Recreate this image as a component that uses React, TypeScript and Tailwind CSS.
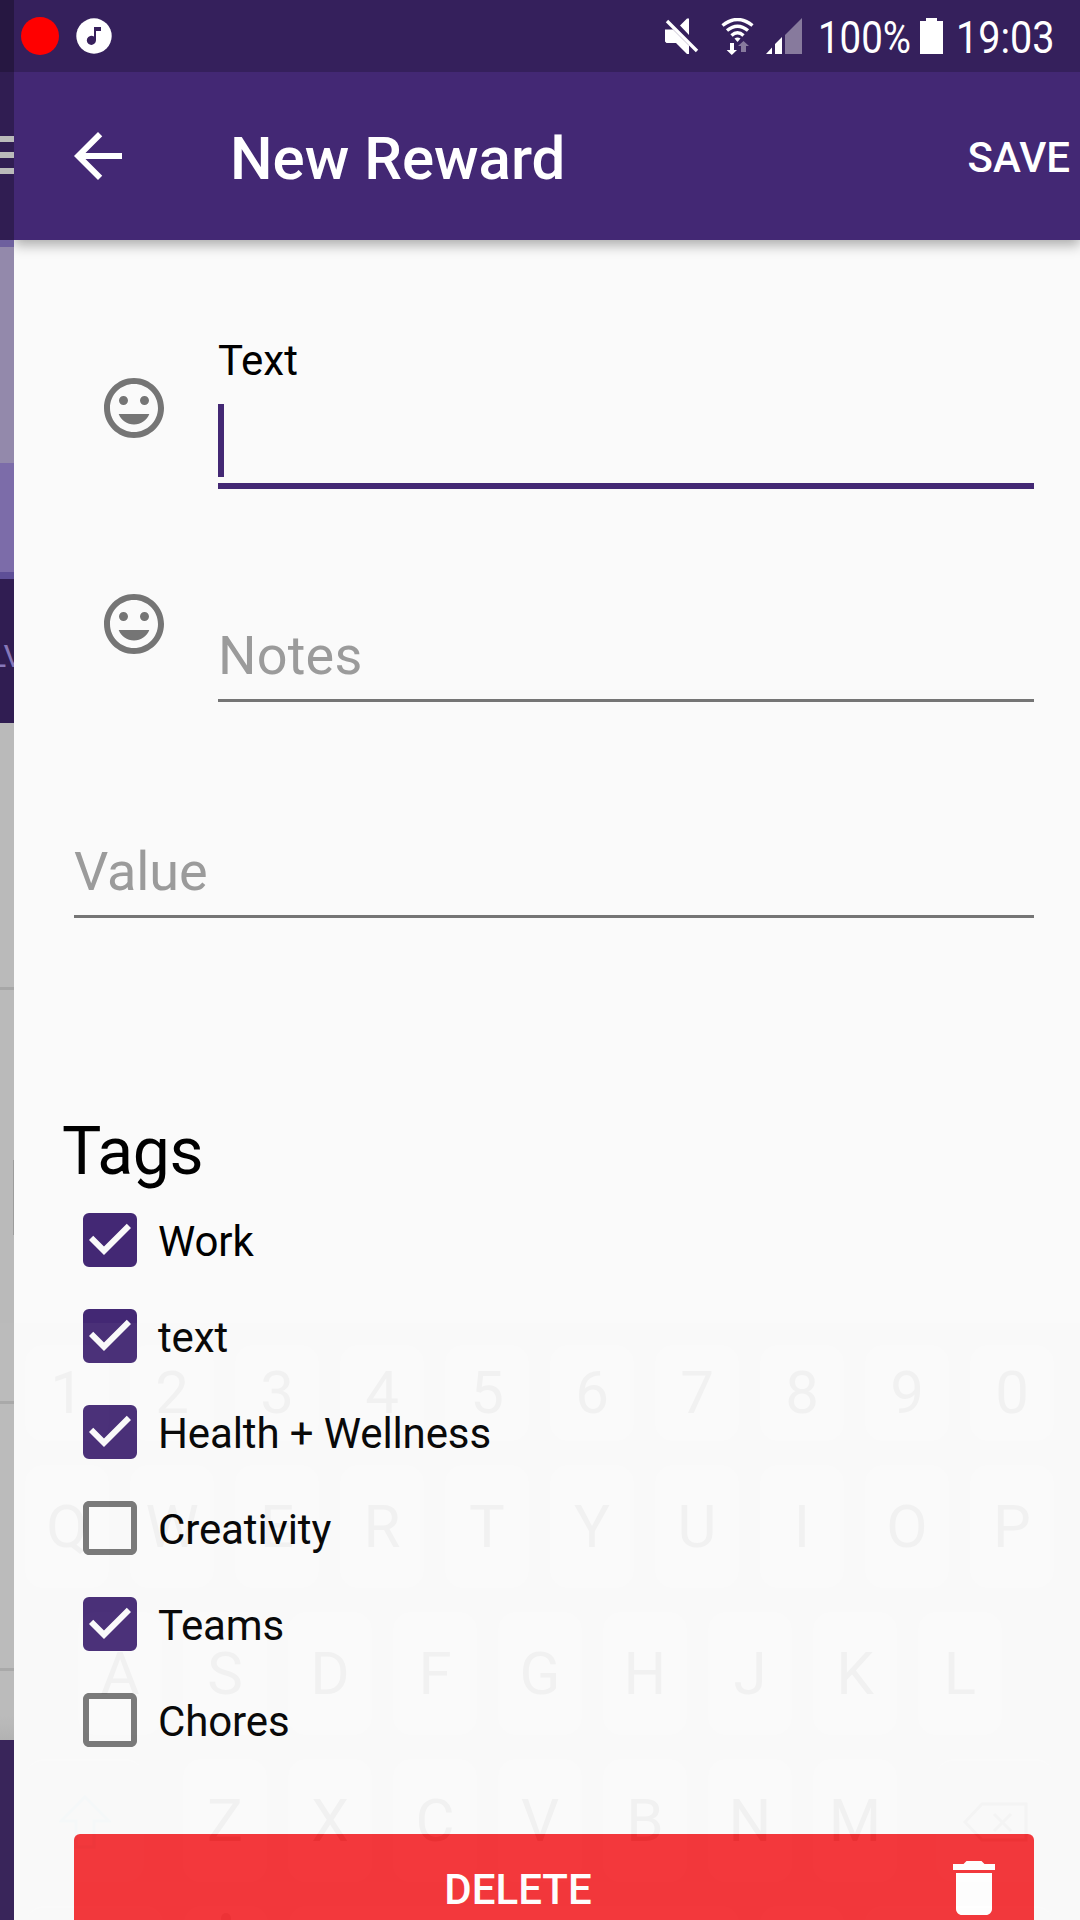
import type { ReactNode } from "react";
import {
  MdArrowBack,
  MdCheckBox,
  MdCheckBoxOutlineBlank,
  MdDelete,
  MdTagFaces,
} from "react-icons/md";

const tags = [
  { name: "Work", checked: true },
  { name: "text", checked: true },
  { name: "Health + Wellness", checked: true },
  { name: "Creativity", checked: false },
  { name: "Teams", checked: true },
  { name: "Chores", checked: false },
];

function StatusBar() {
  return (
    <div className="absolute inset-x-0 top-0 z-20 flex h-[72px] items-center bg-black/20 pl-[21px] text-white">
      <div className="size-[38px] rounded-full bg-[#ff0000]" />
      <svg className="ml-[17px] size-9" viewBox="0 0 36 36">
        <circle cx="18" cy="18" r="17.7" fill="#fff" />
        <path d="M18 9h7v4h-5v9.3a4.6 4.6 0 1 1-2-3.8z" fill="#37205c" />
      </svg>
      <svg className="ml-auto h-[37px] w-[138px]" viewBox="0 0 138 37">
        <g fill="#fff">
          <path d="M0 11.500h8L24 27.500V36h-2L11 25H1.500L0 23.500zM15 7.500L22 0.500h2V17z" />
          <path d="M2 3L32 33" stroke="#fff" strokeWidth="3.400" />
        </g>
        <g fill="none" stroke="#fff" strokeWidth="3.4">
          <path d="M57.500 7.500Q72.500-4.500 87.500 7.500" />
          <path d="M62 12.500Q72.500 4 83 12.500" />
          <path d="M66.500 17.500Q72.500 12 78.500 17.500" />
        </g>
        <path d="M69.500 20.500q3-2 6 0l-3 3.500z" fill="#fff" />
        <path d="M65 25h4v7h3l-5.200 5-5.200-5H65z" fill="#fff" />
        <path d="M76 34h5v-6h3l-5.500-5-5.500 5h3z" fill="#877a9d" />
        <path d="M101 36l6-6.500V36zM110 36V26l7-7v17z" fill="#fff" />
        <path d="M120 36V17L137 0v36z" fill="#877a9d" />
      </svg>
      <div className="ml-[15px] w-[93px] whitespace-nowrap pt-[3px] text-[45px] leading-[52px]">
        <span className="inline-block origin-left scale-x-[0.855]">100%</span>
      </div>
      <svg className="ml-[9px] h-9 w-[23px]" viewBox="0 0 23 36">
        <path d="M6 0h11v3h6v33H0V3h6z" fill="#fff" />
      </svg>
      <div className="ml-[13px] mr-[26px] w-[98px] whitespace-nowrap pt-[3px] text-[45px] leading-[52px]">
        <span className="inline-block origin-left scale-x-[0.88]">19:03</span>
      </div>
    </div>
  );
}

function PreviousScreen() {
  return (
    <div className="flex w-[14px] shrink-0 flex-col overflow-hidden bg-[#bababa]">
      <div className="flex h-[240px] shrink-0 flex-col gap-[10px] bg-[#301d52] pt-[136px]">
        <div className="h-1.5 shrink-0 bg-[#bababa]" />
        <div className="h-1.5 shrink-0 bg-[#bababa]" />
        <div className="h-1.5 shrink-0 bg-[#bababa]" />
      </div>
      <div className="h-[7px] shrink-0 bg-[#6e609e]" />
      <div className="h-[216px] shrink-0 bg-[#9389ab]" />
      <div className="h-[109px] shrink-0 bg-[#7c6ca9]" />
      <div className="h-[7px] shrink-0 bg-[#5e4f97]" />
      <div className="h-[144px] shrink-0 bg-[#301d52] pt-[58px] text-[32px] leading-[38px] text-[#8778b9]">
        <div className="-ml-[11px] whitespace-nowrap">LV</div>
      </div>
      <div className="mt-[264px] h-[3px] shrink-0 bg-[#a7a7a7]" />
      <div className="ml-[13px] mt-[170px] h-[75px] shrink-0 bg-[#9c9c9c]" />
      <div className="mt-[166px] h-[3px] shrink-0 bg-[#a7a7a7]" />
      <div className="mt-[264px] h-[3px] shrink-0 bg-[#a7a7a7]" />
      <div className="mt-[45px] h-6 shrink-0 bg-linear-to-b from-[#bababa] to-[#b0b0b0]" />
      <div className="h-[180px] shrink-0 bg-[#321d54]" />
    </div>
  );
}

function Key({ label, children, wide }: { label?: string; children?: ReactNode; wide?: boolean }) {
  return (
    <div
      className={
        wide
          ? "flex h-full w-[118px] shrink-0 items-center justify-center rounded-[18px] border-t-2 border-white bg-[#f0f0f0]"
          : "flex h-full w-[84px] shrink-0 items-center justify-center rounded-[18px] bg-white"
      }
    >
      {label}
      {children}
    </div>
  );
}

function Keyboard() {
  return (
    <div className="pointer-events-none absolute inset-x-0 top-[1323px] z-10 flex h-[597px] flex-col gap-6 overflow-hidden bg-[#e6e6e6] pt-[22px] text-[60px] leading-[70px] text-[#303030] opacity-[0.04]">
      <div className="flex h-24 shrink-0 gap-[21px] pl-[25px]">
        {"1234567890".split("").map((k) => (
          <Key key={k} label={k} />
        ))}
      </div>
      <div className="flex h-[123px] shrink-0 gap-[21px] pl-[25px]">
        {"QWERTYUIOP".split("").map((k) => (
          <Key key={k} label={k} />
        ))}
      </div>
      <div className="flex h-[123px] shrink-0 gap-[21px] pl-[78px]">
        {"ASDFGHJKL".split("").map((k) => (
          <Key key={k} label={k} />
        ))}
      </div>
      <div className="flex h-[123px] shrink-0 justify-between pl-[26px] pr-[26px]">
        <Key wide>
          <svg className="h-[54px] w-[52px]" viewBox="0 0 52 54" fill="none" stroke="#90d8e4" strokeWidth="3">
            <path d="M26 2L50 26H35v26H17V26H2z" />
          </svg>
        </Key>
        <div className="flex gap-[21px]">
          {"ZXCVBNM".split("").map((k) => (
            <Key key={k} label={k} />
          ))}
        </div>
        <Key wide>
          <svg className="h-[40px] w-[65px]" viewBox="0 0 65 40" fill="none" stroke="#777" strokeWidth="3">
            <path d="M19 2h44v36H19L2 20zM31 12l17 17M48 12L31 29" />
          </svg>
        </Key>
      </div>
      <div className="flex h-[123px] shrink-0 gap-[21px] pl-[26px] pr-[26px]">
        <div className="w-[137px] rounded-[18px] border-t-2 border-white bg-[#f0f0f0]" />
        <div className="flex w-[84px] shrink-0 justify-center rounded-[18px] bg-white pt-[7px]">
          <div className="h-9 w-2.5 rounded-full bg-[#707070]" />
        </div>
        <div className="w-[450px] rounded-[18px] bg-white" />
        <div className="w-[84px] rounded-[18px] bg-white" />
        <div className="grow rounded-[18px] border-t-2 border-white bg-[#f0f0f0]" />
      </div>
    </div>
  );
}

export default function App() {
  return (
    <div className="relative flex h-[1920px] w-[1080px] overflow-hidden bg-[#fafafa] font-[Roboto,sans-serif] text-black">
      <StatusBar />
      <PreviousScreen />
      <main className="flex grow flex-col overflow-hidden">
        <header className="flex h-[240px] shrink-0 items-center bg-[#432874] pl-12 pr-[10px] pt-[72px] font-medium text-white shadow-[0_5px_12px_rgba(0,0,0,0.32)]">
          <MdArrowBack className="size-[72px]" />
          <h1 className="ml-24 pt-[5px] text-[60px] font-medium leading-[70px]">New Reward</h1>
          <button className="ml-auto pt-[3px] text-[42px] font-medium leading-[50px]">SAVE</button>
        </header>

        <div className="mt-[97px] flex pl-[84px] pr-[46px]">
          <MdTagFaces className="mt-[35px] size-[72px] shrink-0 text-[#757575]" />
          <div className="ml-12 grow">
            <div className="text-[42px] leading-[48px]">Text</div>
            <div className="mt-[19px] h-[73px] w-1.5 bg-[#432874]" />
            <div className="mt-1.5 h-1.5 bg-[#432874]" />
          </div>
        </div>

        <div className="mt-[99px] flex pl-[84px] pr-[46px]">
          <MdTagFaces className="size-[72px] shrink-0 text-[#757575]" />
          <div className="ml-12 grow border-b-[3px] border-[#757575] pb-[11px] pt-9 text-[54px] leading-[64px] tracking-[0.2px] text-[#9b9b9b]">
            Notes
          </div>
        </div>

        <div className="ml-[60px] mr-[46px] mt-[138px] border-b-[3px] border-[#757575] pb-[11px] text-[54px] leading-[64px] tracking-[-0.1px] text-[#9b9b9b]">
          Value
        </div>

        <h2 className="ml-12 mt-[194px] text-[66px] leading-[80px] tracking-[-0.4px]">Tags</h2>
        <ul className="ml-[60px]">
          {tags.map((tag) => (
            <li key={tag.name} className="flex h-24 items-center gap-3">
              {tag.checked ? (
                <MdCheckBox className="size-[72px] text-[#432874]" />
              ) : (
                <MdCheckBoxOutlineBlank className="size-[72px] text-[#757575]" />
              )}
              <span className="pt-[3px] text-[42px] leading-[50px] tracking-[-0.12px]">{tag.name}</span>
            </li>
          ))}
        </ul>

        <button className="ml-[60px] mr-[46px] mt-[66px] flex h-[120px] shrink-0 rounded-md bg-[#f33034] px-6 pt-[18px] font-medium text-white">
          <span className="grow pt-[13px] text-center text-[42px] leading-[50px]">DELETE</span>
          <MdDelete className="size-[72px]" />
        </button>
      </main>
      <Keyboard />
    </div>
  );
}
